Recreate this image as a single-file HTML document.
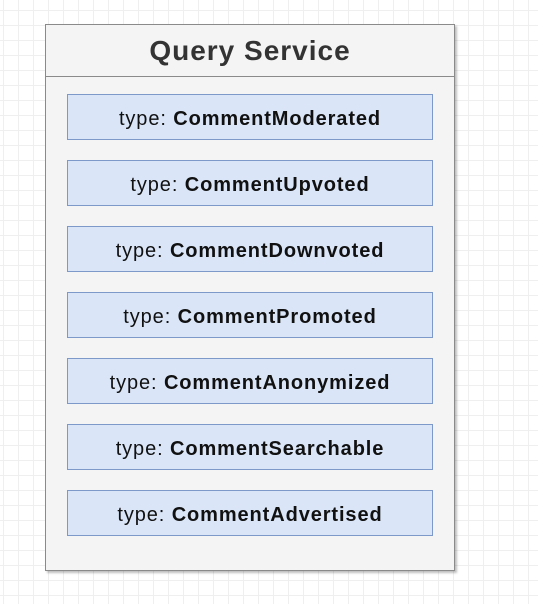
<!DOCTYPE html>
<html><head><style>
body{margin:0;width:538px;height:604px;overflow:hidden;background:#fff;
background-image:linear-gradient(#efefef 1px,transparent 1px),linear-gradient(90deg,#efefef 1px,transparent 1px);
background-size:15px 15px;background-position:3px 10px;font-family:"Liberation Sans",sans-serif;position:relative}
.box{position:absolute;left:45px;top:24px;width:408px;height:545px;background:#f4f4f4;border:1px solid #8a8a8a;box-shadow:2px 2px 2px rgba(0,0,0,.25)}
.hd{height:51px;border-bottom:1px solid #8a8a8a;text-align:center;line-height:52px;font-weight:bold;font-size:28px;letter-spacing:1px;color:#333}
.it{position:absolute;left:21px;width:364px;height:44px;background:#dae6f8;border:1px solid #7c99c9;text-align:center;line-height:48px;font-size:20px;letter-spacing:0.9px;color:#111}
.it b{font-weight:bold}
</style></head><body>
<div class="box"><div class="hd">Query Service</div>
<div class="it" style="top:69px">type: <b>CommentModerated</b></div>
<div class="it" style="top:135px">type: <b>CommentUpvoted</b></div>
<div class="it" style="top:201px">type: <b>CommentDownvoted</b></div>
<div class="it" style="top:267px">type: <b>CommentPromoted</b></div>
<div class="it" style="top:333px">type: <b>CommentAnonymized</b></div>
<div class="it" style="top:399px">type: <b>CommentSearchable</b></div>
<div class="it" style="top:465px">type: <b>CommentAdvertised</b></div>
</div>
</body></html>
